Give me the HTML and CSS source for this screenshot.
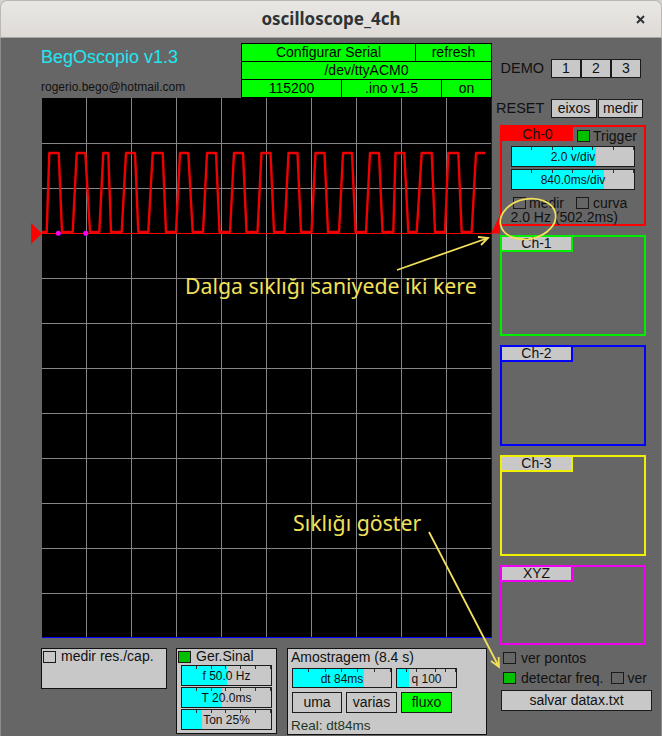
FILE: index.html
```html
<!DOCTYPE html>
<html>
<head>
<meta charset="utf-8">
<title>oscilloscope_4ch</title>
<link rel="stylesheet" href="styles.css">
</head>
<body>
<div class="app">
  <div class="titlebar">
    <span class="title">oscilloscope_4ch</span>
    <svg class="close" width="9" height="9" viewBox="0 0 9 9"><path d="M1 1L8 8M8 1L1 8"/></svg>
  </div>
  <div class="window">
    <div class="left">
      <div class="header">
        <div class="brand">
          <div class="brand-name">BegOscopio v1.3</div>
          <div class="email">rogerio.bego@hotmail.com</div>
        </div>
        <div class="serial">
          <div class="c-cfg">Configurar Serial</div>
          <div class="c-ref">refresh</div>
          <div class="c-dev">/dev/ttyACM0</div>
          <div class="c-baud">115200</div>
          <div class="c-ino">.ino v1.5</div>
          <div class="c-on">on</div>
        </div>
      </div>
      <div class="scope">
        <svg class="scope-svg" width="450" height="540" viewBox="0 0 450 540">
          <path class="grid" d="M44.5 0V540M89.5 0V540M134.5 0V540M179.5 0V540M224.5 0V540M269.5 0V540M314.5 0V540M359.5 0V540M404.5 0V540M0 45.5H450M0 90.5H450M0 135.5H450M0 180.5H450M0 225.5H450M0 270.5H450M0 315.5H450M0 360.5H450M0 405.5H450M0 450.5H450M0 495.5H450"/>
          <path class="edge" d="M449.5 0V540M0 539.5H450"/>
          <path class="trig" d="M0 135.5H449"/>
          <polyline class="trace" points="0,134 4.7,134 7.3,55 16.7,55 20,134 30.7,134 34.7,55 43.3,55 48,134 57.3,134 61.3,55 66.3,55 69,134 79.7,134 84,55 93,55 96.3,134 106.3,134 110.7,55 120.7,55 124,134 134,134 138,55 146.3,55 150.7,134 161,134 165,55 174,55 177.5,134 188,134 192,55 201,55 204.5,134 215.5,134 219.5,55 228.5,55 232,134 242.5,134 246.5,55 255.5,55 259,134 269.5,134 273.5,55 282.5,55 286,134 297,134 301,55 310,55 313.5,134 324,134 328,55 337,55 340.5,134 351.3,134 353.5,55 362.3,55 366.3,134 374.7,134 379.7,55 389.7,55 393,134 403,134 406.3,55 416.3,55 419.7,134 429.7,134 434,55 443,55"/>
          <circle class="dot" cx="16.3" cy="135.3" r="2.5"/>
          <circle class="dot" cx="43.7" cy="135.3" r="2.5"/>
          <polygon class="mark" points="-11,125 0,135.5 -11,146"/>
          <polygon class="mark" points="449,135.5 458,135.5 458,117"/>
        </svg>
      </div>
      <div class="bottom">
        <div class="panel res">
          <div class="cb-row"><span class="cb"></span><span class="lbl">medir res./cap.</span></div>
        </div>
        <div class="panel gen">
          <div class="cb-row"><span class="cb on"></span><span class="lbl">Ger.Sinal</span></div>
          <div class="gen-sliders">
            <div class="slider s-gen"><div class="fill" style="width:45px"></div><span class="sl-label">f 50.0 Hz</span></div>
            <div class="slider s-gen"><div class="fill" style="width:40px"></div><span class="sl-label">T 20.0ms</span></div>
            <div class="slider s-gen"><div class="fill" style="width:20px"></div><span class="sl-label">Ton 25%</span></div>
          </div>
        </div>
        <div class="panel amost">
          <div class="amost-title">Amostragem (8.4 s)</div>
          <div class="amost-sliders">
            <div class="slider s-dt"><div class="fill" style="width:71px"></div><span class="sl-label">dt 84ms</span></div>
            <div class="slider s-q"><div class="fill" style="width:12px"></div><span class="sl-label">q 100</span></div>
          </div>
          <div class="amost-btns">
            <div class="btn b-uma">uma</div>
            <div class="btn b-var">varias</div>
            <div class="btn b-flux">fluxo</div>
          </div>
          <div class="real">Real: dt84ms</div>
        </div>
      </div>
    </div>
    <div class="right">
      <div class="row-demo">
        <span class="row-label demo-label">DEMO</span>
        <div class="btn b-num">1</div>
        <div class="btn b-num">2</div>
        <div class="btn b-num">3</div>
      </div>
      <div class="row-reset">
        <span class="row-label">RESET</span>
        <div class="btn b-eixos">eixos</div>
        <div class="btn b-medir">medir</div>
      </div>
      <div class="ch ch0">
        <div class="ch-head">
          <div class="tab">Ch-0</div>
          <span class="cb on trig-cb"></span><span class="lbl trig-lbl">Trigger</span>
        </div>
        <div class="slider s-ch first"><div class="fill" style="width:84px"></div><span class="sl-label">2.0 v/div</span></div>
        <div class="slider s-ch"><div class="fill" style="width:92px"></div><span class="sl-label">840.0ms/div</span></div>
        <div class="ch-opts">
          <span class="cb cb-medir"></span><span class="lbl">medir</span>
          <span class="cb cb-curva"></span><span class="lbl">curva</span>
        </div>
        <div class="freq">2.0 Hz (502.2ms)</div>
      </div>
      <div class="ch ch1"><div class="tab">Ch-1</div></div>
      <div class="ch ch2"><div class="tab">Ch-2</div></div>
      <div class="ch ch3"><div class="tab">Ch-3</div></div>
      <div class="ch xyz"><div class="tab">XYZ</div></div>
      <div class="opt-row first"><span class="cb"></span><span class="lbl">ver pontos</span></div>
      <div class="opt-row"><span class="cb on"></span><span class="lbl">detectar freq.</span><span class="cb cb-ver"></span><span class="lbl">ver</span></div>
      <div class="btn b-salvar">salvar datax.txt</div>
    </div>
  </div>
  <svg class="annot" width="662" height="736" viewBox="0 0 662 736">
    <ellipse cx="528" cy="219" rx="28" ry="20" transform="rotate(-12 528 219)"/>
    <path d="M397 270L488 238M478 237L488 238L481 245"/>
    <path d="M429 532L499 667M498.6 657L499 667L491 661"/>
  </svg>
  <div class="note note1">Dalga sıklığı saniyede iki kere</div>
  <div class="note note2">Sıklığı göster</div>
</div>
</body>
</html>
```
FILE: styles.css
```css
* { box-sizing: border-box; }
html, body { margin: 0; padding: 0; }
html { background: #d6d3cf; }
body {
  width: 662px;
  height: 736px;
  overflow: hidden;
  font-family: "Liberation Sans", Arial, sans-serif;
  color: #111;
}
.app { position: relative; width: 662px; height: 736px; }

.titlebar {
  position: relative;
  height: 38px;
  background: linear-gradient(#e9e7e4, #dedbd7);
  border: 1px solid #bcb8b4;
  border-bottom-color: #a9a5a1;
  border-radius: 7px 7px 0 0;
  display: flex;
  align-items: center;
  justify-content: center;
}
.title {
  font-family: "Noto Sans", "DejaVu Sans", sans-serif;
  font-weight: 700;
  font-size: 17px;
  color: #2e3436;
  margin-top: -1px;
}
.close {
  position: absolute;
  right: 16px;
  top: 14px;
  stroke: #2e3436;
  stroke-width: 2;
}

.window {
  display: flex;
  height: 698px;
  background: #666666;
  border-left: 1px solid #8c8c8c;
  border-right: 1px solid #8c8c8c;
}
.left {
  width: 451px;
  margin-left: 40px;
  display: flex;
  flex-direction: column;
}
.header {
  height: 60px;
  display: flex;
  justify-content: space-between;
  align-items: flex-start;
}
.brand { padding-top: 9px; }
.brand-name {
  font-size: 18px;
  line-height: 20px;
  color: #1fe6f0;
}
.email {
  font-size: 12px;
  line-height: 14px;
  margin-top: 13px;
  color: #111;
}
.serial {
  margin-top: 5px;
  width: 251px;
  display: grid;
  grid-template-columns: 100px 74px 26px 50px;
  grid-auto-rows: 18px;
  border-top: 1px solid #000;
  border-left: 1px solid #000;
  background: #00ff00;
}
.serial > div {
  border-right: 1px solid #000;
  border-bottom: 1px solid #000;
  font-size: 14px;
  line-height: 17px;
  text-align: center;
  color: #000;
}
.c-cfg { grid-column: 1 / 3; }
.c-ref { grid-column: 3 / 5; }
.c-dev { grid-column: 1 / 5; }
.c-baud { grid-column: 1 / 2; }
.c-ino { grid-column: 2 / 4; }
.c-on { grid-column: 4 / 5; }

.scope {
  margin-left: 1px;
  width: 450px;
  height: 540px;
  background: #000;
}
.scope-svg { display: block; overflow: visible; }
.grid { stroke: #858585; stroke-width: 1; fill: none; }
.edge { stroke: #0000ff; stroke-width: 1; fill: none; }
.trig { stroke: #ff0000; stroke-width: 1; fill: none; }
.trace { stroke: #f00000; stroke-width: 2.4; fill: none; stroke-linejoin: round; }
.dot { fill: #ff00ff; }
.mark { fill: #ff0000; }

.bottom {
  margin-top: 10px;
  display: flex;
  align-items: flex-start;
}
.panel {
  background: #c8c8c8;
  border: 1px solid #111;
}
.res { width: 126px; height: 41px; padding: 1px 0 0 1px; }
.gen { width: 101px; height: 86px; margin-left: 9px; padding: 1px 0 0 1px; }
.amost { width: 200px; height: 87px; margin-left: 10px; padding: 0 0 0 3px; }

.cb-row { display: flex; align-items: center; height: 13px; }
.cb {
  display: inline-block;
  flex: none;
  width: 13px;
  height: 12px;
  border: 1px solid #1a1a1a;
}
.cb.on { background: #00c000; }
.lbl { font-size: 14px; line-height: 13px; white-space: nowrap; }
.cb-row .lbl { margin-left: 5px; }

.gen-sliders {
  margin: 2px 0 0 3px;
  display: flex;
  flex-direction: column;
  gap: 1px;
}
.slider {
  position: relative;
  height: 21px;
  border: 1px solid #1a1a1a;
  background: #c8c8c8;
  text-align: center;
}
.slider::after {
  content: "";
  position: absolute;
  left: 0; right: 0; top: 0;
  height: 3px;
  background: repeating-linear-gradient(to right, transparent 0, transparent calc(100% / 6 - 1px), #333 calc(100% / 6 - 1px), #333 calc(100% / 6));
}
.fill {
  position: absolute;
  left: 0; top: 0; bottom: 0;
  background: #00ffff;
}
.sl-label {
  position: relative;
  z-index: 1;
  font-size: 12px;
  line-height: 19px;
  color: #111;
}
.s-gen { width: 91px; }

.amost-title { font-size: 14px; line-height: 16px; }
.amost-sliders { display: flex; gap: 4px; margin-top: 3px; margin-left: 1px; }
.s-dt { width: 100px; height: 20px; }
.s-q { width: 61px; height: 20px; }
.s-dt .sl-label, .s-q .sl-label { line-height: 18px; }
.amost-btns { display: flex; gap: 4px; margin-top: 4px; margin-left: 1px; }
.btn {
  background: #c8c8c8;
  border: 1px solid #1a1a1a;
  font-size: 14px;
  text-align: center;
  color: #111;
}
.b-uma { width: 50px; height: 21px; line-height: 19px; }
.b-var { width: 51px; height: 21px; line-height: 19px; }
.b-flux { width: 51px; height: 21px; line-height: 19px; background: #00ff00; }
.real {
  font-size: 13.5px;
  line-height: 16px;
  margin-top: 5px;
  color: #1f361f;
}

.right {
  margin-left: 4px;
  width: 165px;
  display: flex;
  flex-direction: column;
}
.row-demo, .row-reset {
  display: flex;
  align-items: center;
  height: 19px;
}
.row-demo { margin-top: 21px; }
.row-reset { margin-top: 21px; }
.row-label {
  width: 55px;
  font-size: 14.5px;
  line-height: 19px;
}
.demo-label { padding-left: 4.5px; }
.row-demo .btn, .row-reset .btn { height: 19px; line-height: 17px; }
.b-num { width: 30px; }
.b-eixos { width: 46px; }
.b-medir { width: 45px; margin-left: 1px; }

.ch {
  margin-left: 4px;
  width: 146px;
  height: 101px;
  border: 2px solid;
  margin-top: 9px;
}
.ch0 { border-color: #ff0000; margin-top: 7px; }
.ch1 { border-color: #00ee00; }
.ch2 { border-color: #0000ff; }
.ch3 { border-color: #f0f000; }
.xyz { border-color: #f000f0; height: 80px; }
.tab {
  width: 71px;
  height: 15px;
  background: #c8c8c8;
  border-right: 2px solid;
  border-bottom: 2px solid;
  border-color: inherit;
  font-size: 14px;
  line-height: 13px;
  text-align: center;
  color: #111;
}
.ch-head { display: flex; align-items: flex-start; height: 16px; }
.ch0 .tab { background: #ff0000; height: 14px; border: none; line-height: 14px; }
.trig-cb { margin: 3px 0 0 4px; }
.trig-lbl { margin: 2px 0 0 3px; line-height: 14px; }
.s-ch { width: 124px; margin-left: 9px; margin-top: 2px; }
.s-ch.first { margin-top: 3px; }
.ch-opts {
  display: flex;
  align-items: center;
  height: 12px;
  margin-top: 7px;
}
.cb-medir { margin-left: 11px; }
.cb-curva { margin-left: 12px; }
.ch-opts .lbl { margin-left: 3px; }
.ch-opts .cb-curva + .lbl { margin-left: 4px; }
.freq {
  font-size: 14px;
  line-height: 16px;
  margin-left: 8.5px;
}

.opt-row {
  display: flex;
  align-items: center;
  height: 20px;
  padding-left: 7px;
}
.opt-row.first { margin-top: 3px; }
.opt-row .lbl { margin-left: 5px; }
.cb-ver { margin-left: 7px; }
.opt-row .cb-ver + .lbl { margin-left: 4px; }
.b-salvar {
  margin: 2px 0 0 5px;
  width: 151px;
  height: 21px;
  line-height: 19px;
}

.annot {
  position: absolute;
  left: 0;
  top: 0;
  pointer-events: none;
  fill: none;
  stroke: #f2e05a;
  stroke-width: 1.8;
}
.note {
  position: absolute;
  font-family: "Noto Sans", "Open Sans", sans-serif;
  font-size: 21.3px;
  line-height: 21px;
  color: #f2e05a;
  white-space: nowrap;
}
.note1 { left: 185px; top: 275px; }
.note2 { left: 293px; top: 512px; }
```
